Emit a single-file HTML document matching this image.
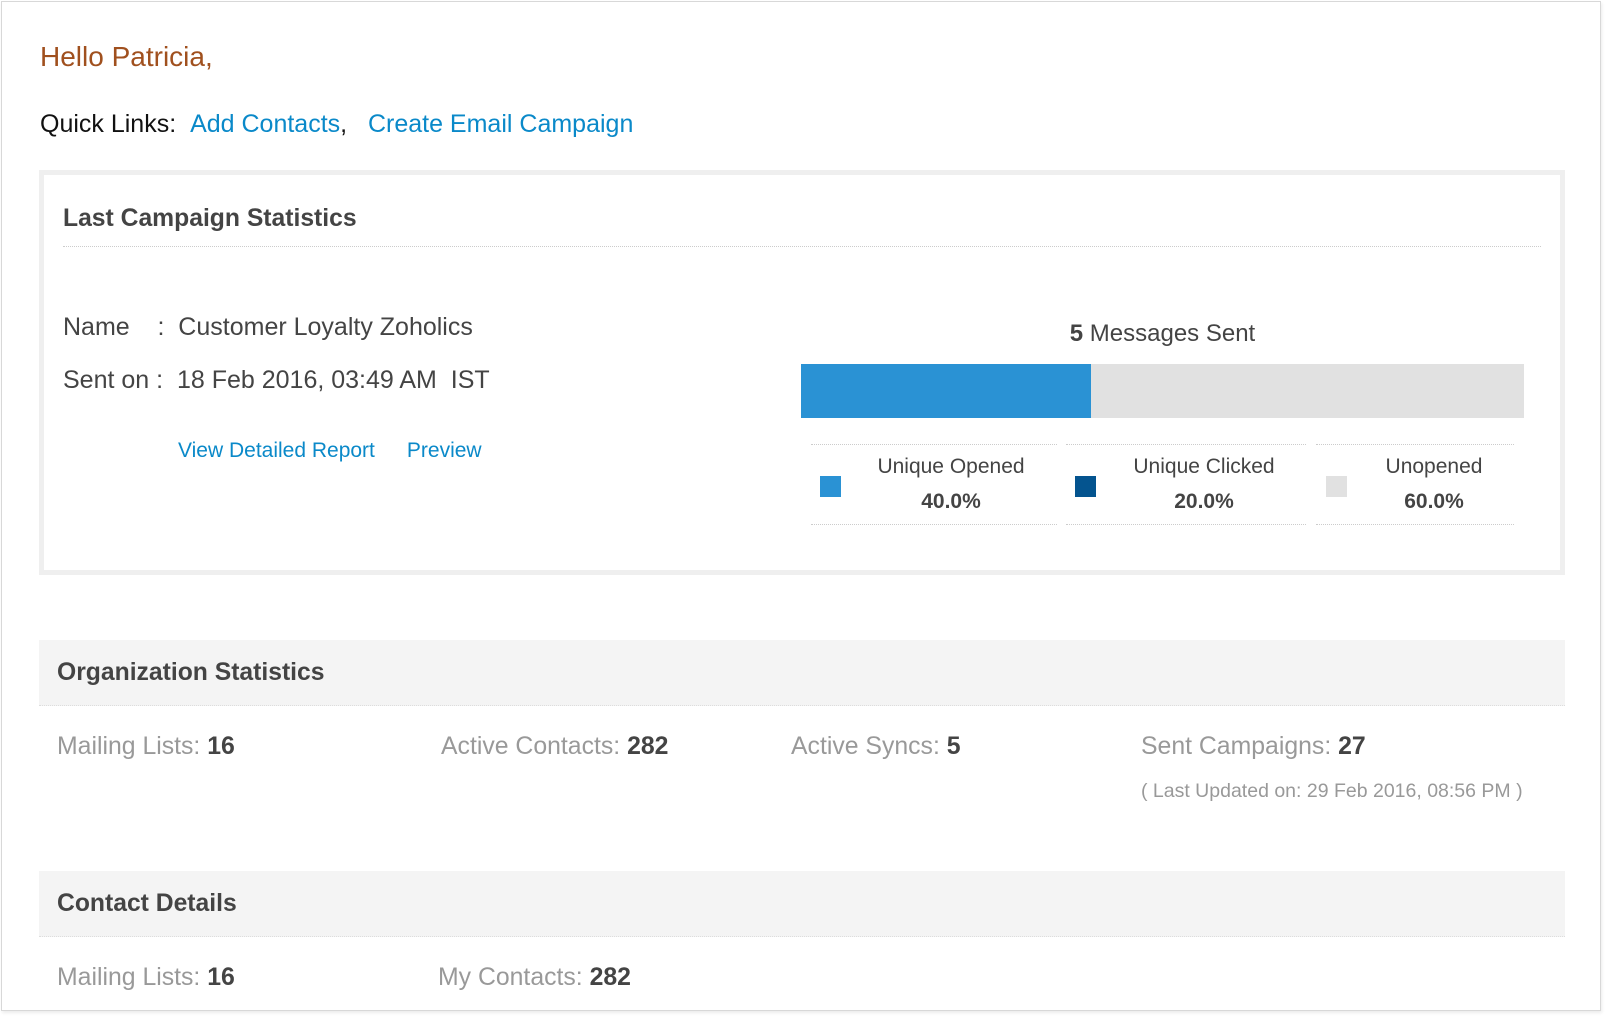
<!DOCTYPE html>
<html><head><meta charset="utf-8"><style>
*{margin:0;padding:0;box-sizing:border-box}
body{width:1608px;height:1019px;background:#fff;font-family:"Liberation Sans",Arial,sans-serif;position:relative;overflow:hidden;color:#444}
.abs{position:absolute;white-space:nowrap}
.frame{position:absolute;left:1px;top:1px;width:1600px;height:1010px;border:1px solid #d8d8d8;box-shadow:1px 2px 3px rgba(0,0,0,.08)}
a{color:#0a89c9;text-decoration:none}
.box{position:absolute;left:39px;top:170px;width:1526px;height:405px;border:5px solid #efefef}
.dot{position:absolute;border-top:1px dotted #ccc;height:0}
.band{position:absolute;left:39px;width:1526px;height:66px;background:#f4f4f4;border-bottom:1px dotted #ddd}
.band b{position:absolute;left:18px;top:19px;font-size:24.7px;color:#444}
.st{font-size:24.8px;color:#999}
.st b{color:#444}
.leg{position:absolute;text-align:center;font-size:21px;color:#444}
.sq{position:absolute;width:21px;height:21px}
</style></head><body>
<div class="frame"></div>
<div class="abs" style="left:40px;top:41px;font-size:28px;color:#a0501e">Hello Patricia,</div>
<div class="abs" style="left:40px;top:110px;font-size:25px;color:#111">Quick Links:&nbsp;&nbsp;<a>Add Contacts</a>,&nbsp;&nbsp;&nbsp;<a>Create Email Campaign</a></div>
<div class="box"></div>
<div class="abs" style="left:63px;top:205px;font-size:24.7px;font-weight:bold;color:#444">Last Campaign Statistics</div>
<div class="dot" style="left:63px;top:246px;width:1478px"></div>
<div class="abs" style="left:63px;top:313px;font-size:25px;color:#444">Name&nbsp;&nbsp;&nbsp;&nbsp;:&nbsp;&nbsp;Customer Loyalty Zoholics</div>
<div class="abs" style="left:63px;top:366px;font-size:25px;color:#444">Sent on :&nbsp;&nbsp;18 Feb 2016, 03:49 AM&nbsp;&nbsp;IST</div>
<div class="abs" style="left:178px;top:439px;font-size:21px"><a>View Detailed Report</a><a style="margin-left:32px">Preview</a></div>
<div class="abs" style="left:801px;width:723px;top:320px;text-align:center;font-size:24px;color:#444"><b>5</b> Messages Sent</div>
<div style="position:absolute;left:801px;top:364px;width:723px;height:54px;background:#e1e1e1"></div>
<div style="position:absolute;left:801px;top:364px;width:290px;height:54px;background:#2a92d4"></div>
<div class="dot" style="left:811px;top:444px;width:246px"></div>
<div class="dot" style="left:1066px;top:444px;width:240px"></div>
<div class="dot" style="left:1316px;top:444px;width:198px"></div>
<div class="dot" style="left:811px;top:524px;width:246px"></div>
<div class="dot" style="left:1066px;top:524px;width:240px"></div>
<div class="dot" style="left:1316px;top:524px;width:198px"></div>
<div class="sq" style="left:820px;top:476px;background:#2a92d4"></div>
<div class="sq" style="left:1075px;top:476px;background:#04548f"></div>
<div class="sq" style="left:1326px;top:476px;background:#e1e1e1"></div>
<div class="leg" style="left:851px;width:200px;top:455px">Unique Opened<br><b style="display:block;margin-top:11px">40.0%</b></div>
<div class="leg" style="left:1104px;width:200px;top:455px">Unique Clicked<br><b style="display:block;margin-top:11px">20.0%</b></div>
<div class="leg" style="left:1334px;width:200px;top:455px">Unopened<br><b style="display:block;margin-top:11px">60.0%</b></div>
<div class="band" style="top:640px"><b>Organization Statistics</b></div>
<div class="abs st" style="left:57px;top:733px">Mailing Lists: <b>16</b></div>
<div class="abs st" style="left:441px;top:733px">Active Contacts: <b>282</b></div>
<div class="abs st" style="left:791px;top:733px">Active Syncs: <b>5</b></div>
<div class="abs st" style="left:1141px;top:733px">Sent Campaigns: <b>27</b></div>
<div class="abs" style="left:1141px;top:780px;font-size:19.5px;color:#999">( Last Updated on: 29 Feb 2016, 08:56 PM )</div>
<div class="band" style="top:871px"><b>Contact Details</b></div>
<div class="abs st" style="left:57px;top:964px">Mailing Lists: <b>16</b></div>
<div class="abs st" style="left:438px;top:964px">My Contacts: <b>282</b></div>
</body></html>
